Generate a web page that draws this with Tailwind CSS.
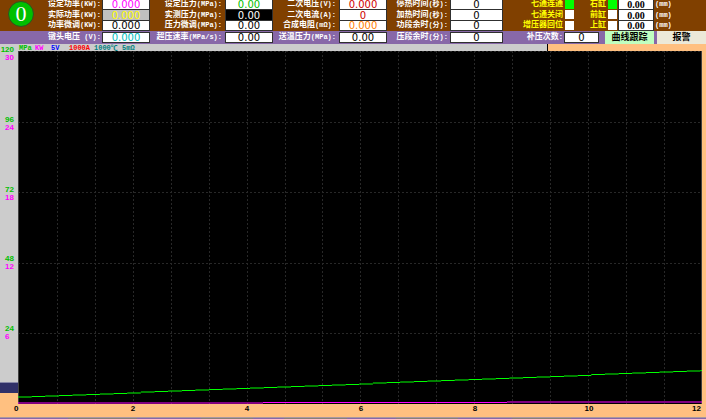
<!DOCTYPE html>
<html lang="zh-CN">
<head>
<meta charset="utf-8">
<title>曲线跟踪</title>
<script src="https://cdn.jsdelivr.net/npm/@tailwindcss/browser@4"></script>
</head>
<body class="min-h-screen flex flex-col overflow-hidden bg-[#ffc080] font-['Liberation_Serif','Noto_Sans_CJK_SC',serif] text-[8px] leading-[8px] font-bold whitespace-nowrap">

<header class="text-white">
  <!-- Set points and measured values -->
  <div class="relative bg-[#804000]">
    <output aria-label="状态" class="absolute left-2 top-px size-[26px] rounded-full border border-[#305020] bg-[#00c000] flex items-center justify-center text-[22px] font-normal">0</output>
    <div class="grid grid-rows-[10px_11px_10px] grid-cols-[102fr_48fr_75fr_48fr_66fr_48fr_63fr_53fr_62fr_9fr_33fr_11fr_36fr_52fr]">
      <label for="a1" class="min-w-0 pr-px pb-[2px] flex items-center justify-end">设定功率<span class="text-[7px] font-['Liberation_Mono','Noto_Sans_CJK_SC',monospace]">(KW):</span></label>
      <input id="a1" readonly value="0.000" class="min-w-0 w-full h-full bg-white border-b border-x border-[#303030] text-center font-['DejaVu_Sans',sans-serif] text-[10px] leading-[9px] font-normal text-[#ff00ff]">
      <label for="a2" class="min-w-0 pr-[3px] pb-[2px] flex items-center justify-end">设定压力<span class="text-[7px] font-['Liberation_Mono','Noto_Sans_CJK_SC',monospace]">(MPa):</span></label>
      <input id="a2" readonly value="0.00" class="min-w-0 w-full h-full bg-white border-b border-x border-[#303030] text-center font-['DejaVu_Sans',sans-serif] text-[10px] leading-[9px] font-normal text-[#00c000]">
      <label for="a3" class="min-w-0 pr-[3px] pb-[2px] flex items-center justify-end">二次电压<span class="text-[7px] font-['Liberation_Mono','Noto_Sans_CJK_SC',monospace]">(V):</span></label>
      <input id="a3" readonly value="0.000" class="min-w-0 w-full h-full bg-white border-b border-x border-[#303030] text-center font-['DejaVu_Sans',sans-serif] text-[10px] leading-[9px] font-normal text-[#d00000]">
      <label for="a4" class="min-w-0 pr-[2px] pb-[2px] flex items-center justify-end">停热时间<span class="text-[7px] font-['Liberation_Mono','Noto_Sans_CJK_SC',monospace]">(秒):</span></label>
      <input id="a4" readonly value="0" class="min-w-0 w-full h-full bg-white border-b border-x border-[#303030] text-center font-['DejaVu_Sans',sans-serif] text-[10px] leading-[9px] font-normal text-black">
      <label for="a5" class="min-w-0 pr-[2px] pb-[2px] flex items-center justify-end text-[#ffff00]">七通连通</label>
      <input id="a5" type="checkbox" checked class="appearance-none size-[9px] bg-white checked:bg-[#00ff00]">
      <label for="a6" class="min-w-0 pr-px pb-[2px] flex items-center justify-end text-[#ffff00]">右缸</label>
      <input id="a6" type="checkbox" checked class="appearance-none justify-self-center size-[9px] bg-white checked:bg-[#00ff00]">
      <input id="a7" aria-label="右缸 (mm)" readonly value="0.00" class="min-w-0 w-full h-full bg-white border-b border-x border-[#303030] text-center text-[10px] leading-[9px] font-bold text-black">
      <label for="a7" class="pl-px pb-[2px] flex items-center text-[7px] font-['Liberation_Mono',monospace]">(mm)</label>

      <label for="b1" class="min-w-0 pr-px pb-[2px] flex items-center justify-end">实际功率<span class="text-[7px] font-['Liberation_Mono','Noto_Sans_CJK_SC',monospace]">(KW):</span></label>
      <input id="b1" readonly value="0.000" class="min-w-0 w-full h-full bg-[#c0c0c0] border-b border-x border-[#303030] text-center font-['DejaVu_Sans',sans-serif] text-[10px] leading-[9px] font-normal text-[#ffff00]">
      <label for="b2" class="min-w-0 pr-[3px] pb-[2px] flex items-center justify-end">实测压力<span class="text-[7px] font-['Liberation_Mono','Noto_Sans_CJK_SC',monospace]">(MPa):</span></label>
      <input id="b2" readonly value="0.00" class="min-w-0 w-full h-full bg-black border-b border-x border-[#303030] text-center font-['DejaVu_Sans',sans-serif] text-[10px] leading-[9px] font-normal text-white">
      <label for="b3" class="min-w-0 pr-[3px] pb-[2px] flex items-center justify-end">二次电流<span class="text-[7px] font-['Liberation_Mono','Noto_Sans_CJK_SC',monospace]">(A):</span></label>
      <input id="b3" readonly value="0" class="min-w-0 w-full h-full bg-white border-b border-x border-[#303030] text-center font-['DejaVu_Sans',sans-serif] text-[10px] leading-[9px] font-normal text-[#d00000]">
      <label for="b4" class="min-w-0 pr-[2px] pb-[2px] flex items-center justify-end">加热时间<span class="text-[7px] font-['Liberation_Mono','Noto_Sans_CJK_SC',monospace]">(秒):</span></label>
      <input id="b4" readonly value="0" class="min-w-0 w-full h-full bg-white border-b border-x border-[#303030] text-center font-['DejaVu_Sans',sans-serif] text-[10px] leading-[9px] font-normal text-black">
      <label for="b5" class="min-w-0 pr-[2px] pb-[2px] flex items-center justify-end text-[#ffff00]">七通关闭</label>
      <input id="b5" type="checkbox" class="appearance-none size-[9px] bg-white checked:bg-[#00ff00]">
      <label for="b6" class="min-w-0 pr-px pb-[2px] flex items-center justify-end text-[#ffff00]">前缸</label>
      <input id="b6" type="checkbox" class="appearance-none justify-self-center size-[9px] bg-white checked:bg-[#00ff00]">
      <input id="b7" aria-label="前缸 (mm)" readonly value="0.00" class="min-w-0 w-full h-full bg-white border-b border-x border-[#303030] text-center text-[10px] leading-[9px] font-bold text-black">
      <label for="b7" class="pl-px pb-[2px] flex items-center text-[7px] font-['Liberation_Mono',monospace]">(mm)</label>

      <label for="c1" class="min-w-0 pr-px pb-[2px] flex items-center justify-end">功率微调<span class="text-[7px] font-['Liberation_Mono','Noto_Sans_CJK_SC',monospace]">(KW):</span></label>
      <input id="c1" readonly value="0.000" class="min-w-0 w-full h-full bg-white border-b border-x border-[#303030] text-center font-['DejaVu_Sans',sans-serif] text-[10px] leading-[9px] font-normal text-black">
      <label for="c2" class="min-w-0 pr-[3px] pb-[2px] flex items-center justify-end">压力微调<span class="text-[7px] font-['Liberation_Mono','Noto_Sans_CJK_SC',monospace]">(MPa):</span></label>
      <input id="c2" readonly value="0.00" class="min-w-0 w-full h-full bg-white border-b border-x border-[#303030] text-center font-['DejaVu_Sans',sans-serif] text-[10px] leading-[9px] font-normal text-black">
      <label for="c3" class="min-w-0 pr-[3px] pb-[2px] flex items-center justify-end">合成电阻<span class="text-[7px] font-['Liberation_Mono','Noto_Sans_CJK_SC',monospace]">(mΩ):</span></label>
      <input id="c3" readonly value="0.000" class="min-w-0 w-full h-full bg-white border-b border-x border-[#303030] text-center font-['DejaVu_Sans',sans-serif] text-[10px] leading-[9px] font-normal text-[#ff8000]">
      <label for="c4" class="min-w-0 pr-[2px] pb-[2px] flex items-center justify-end">功段余时<span class="text-[7px] font-['Liberation_Mono','Noto_Sans_CJK_SC',monospace]">(分):</span></label>
      <input id="c4" readonly value="0" class="min-w-0 w-full h-full bg-white border-b border-x border-[#303030] text-center font-['DejaVu_Sans',sans-serif] text-[10px] leading-[9px] font-normal text-black">
      <label for="c5" class="min-w-0 pr-[2px] pb-[2px] flex items-center justify-end text-[#ffff00]">增压器回位</label>
      <input id="c5" type="checkbox" class="appearance-none size-[9px] bg-white checked:bg-[#00ff00]">
      <label for="c6" class="min-w-0 pr-px pb-[2px] flex items-center justify-end text-[#ffff00]">上缸</label>
      <input id="c6" type="checkbox" class="appearance-none justify-self-center size-[9px] bg-white checked:bg-[#00ff00]">
      <input id="c7" aria-label="上缸 (mm)" readonly value="0.00" class="min-w-0 w-full h-full bg-white border-b border-x border-[#303030] text-center text-[10px] leading-[9px] font-bold text-black">
      <label for="c7" class="pl-px pb-[2px] flex items-center text-[7px] font-['Liberation_Mono',monospace]">(mm)</label>
    </div>
  </div>

  <!-- Voltage row and actions -->
  <div class="bg-[#8868a8] grid grid-rows-[13px] grid-cols-[102fr_48fr_75fr_48fr_66fr_48fr_63fr_53fr_61fr_35fr_6fr_49fr_3fr_49fr]">
    <label for="d1" class="min-w-0 pr-px pb-px flex items-center justify-end">镦头电压<span class="text-[7px] font-['Liberation_Mono','Noto_Sans_CJK_SC',monospace]">&nbsp;(V):</span></label>
    <input id="d1" readonly value="0.000" class="min-w-0 w-full h-[11px] self-center bg-white border border-[#303030] text-center font-['DejaVu_Sans',sans-serif] text-[10px] leading-[9px] font-normal text-[#00c0c0]">
    <label for="d2" class="min-w-0 pr-[3px] pb-px flex items-center justify-end">超压速率<span class="text-[7px] font-['Liberation_Mono','Noto_Sans_CJK_SC',monospace]">(MPa/s):</span></label>
    <input id="d2" readonly value="0.00" class="min-w-0 w-full h-[11px] self-center bg-white border border-[#303030] text-center font-['DejaVu_Sans',sans-serif] text-[10px] leading-[9px] font-normal text-black">
    <label for="d3" class="min-w-0 pr-[3px] pb-px flex items-center justify-end">送温压力<span class="text-[7px] font-['Liberation_Mono','Noto_Sans_CJK_SC',monospace]">(MPa):</span></label>
    <input id="d3" readonly value="0.00" class="min-w-0 w-full h-[11px] self-center bg-white border border-[#303030] text-center font-['DejaVu_Sans',sans-serif] text-[10px] leading-[9px] font-normal text-black">
    <label for="d4" class="min-w-0 pr-[2px] pb-px flex items-center justify-end">压段余时<span class="text-[7px] font-['Liberation_Mono','Noto_Sans_CJK_SC',monospace]">(分):</span></label>
    <input id="d4" readonly value="0" class="min-w-0 w-full h-[11px] self-center bg-white border border-[#303030] text-center font-['DejaVu_Sans',sans-serif] text-[10px] leading-[9px] font-normal text-black">
    <label for="d5" class="min-w-0 pr-px pb-px flex items-center justify-end">补压次数<span class="text-[7px] font-['Liberation_Mono',monospace]">:</span></label>
    <input id="d5" readonly value="0" class="min-w-0 w-full h-[11px] self-center bg-white border border-[#303030] text-center font-['DejaVu_Sans',sans-serif] text-[10px] leading-[9px] font-normal text-black">
    <button class="col-start-12 min-w-0 bg-[#c0ffc0] text-black text-[9px] leading-[11px] flex items-center justify-center">曲线跟踪</button>
    <button class="col-start-14 min-w-0 bg-[#ece9d8] text-black text-[9px] leading-[11px] flex items-center justify-center">报警</button>
  </div>
</header>

<main class="flex-1 grid grid-cols-[18px_1fr] font-['Liberation_Sans','Noto_Sans_CJK_SC',sans-serif]">
  <!-- Vertical scales: pressure (green) and power (magenta) -->
  <div class="flex flex-col">
    <div class="flex-1 bg-[#cccccc] pt-[2px] pb-[41px] pr-1 flex flex-col justify-between text-right text-[#00c000]">
      <div>120<div class="w-[9px] ml-auto text-left text-[#ff00ff]">30</div></div>
      <div>96<div class="w-[9px] ml-auto text-left text-[#ff00ff]">24</div></div>
      <div>72<div class="w-[9px] ml-auto text-left text-[#ff00ff]">18</div></div>
      <div>48<div class="w-[9px] ml-auto text-left text-[#ff00ff]">12</div></div>
      <div>24<div class="w-[9px] ml-auto text-left text-[#ff00ff]">6</div></div>
    </div>
    <div class="h-[11px] bg-[#303068] border-t border-[#8888a8]"></div>
    <div class="h-[11px]"></div>
  </div>

  <div class="flex flex-col">
    <div class="h-[7px] grid grid-cols-[530fr_158fr] text-[7px] font-['Liberation_Mono','Noto_Sans_CJK_SC',monospace]">
      <div class="bg-[#cccccc] border-r border-black flex items-center pl-px">
        <span class="w-4 text-[#00c000]">MPa</span>
        <span class="w-4 text-[#ff00ff]">KW</span>
        <span class="w-[18px] text-[#0000ff]">5V</span>
        <span class="w-[25px] text-[#ff0000]">1000A</span>
        <span class="w-7 text-[#008080]">1000℃</span>
        <span class="text-[#008080]">5mΩ</span>
      </div>
    </div>
    <div class="flex-1 flex flex-col pr-1">
      <svg class="block w-full flex-1 min-h-0 bg-black" viewBox="0 0 684 353" preserveAspectRatio="none" role="img" aria-label="压力与功率曲线">
        <g stroke="#282828" stroke-dasharray="2 2" fill="none">
          <path d="M39.5 0V353M77.5 0V353M115.5 0V353M153.5 0V353M191.5 0V353M229.5 0V353M267.5 0V353M304.5 0V353M342.5 0V353M380.5 0V353M418.5 0V353M456.5 0V353M494.5 0V353M532.5 0V353M570.5 0V353M608.5 0V353M646.5 0V353"/>
          <path d="M0 .5H684M0 71.5H684M0 141.5H684M0 212.5H684M0 282.5H684"/>
        </g>
        <path d="M.5 0V353M683.5 0V353" stroke="#404040"/>
        <path id="pressure" fill="none" stroke="#00ff00"/>
        <path d="M0 352H245M245 351.5H489M489 351H684" stroke="#ff00ff"/>
      </svg>
    </div>
  </div>
</main>

<!-- Horizontal scale -->
<div class="h-[13px] pl-[14px] pr-[5px] pt-px flex font-['Liberation_Sans',sans-serif] text-black">
  <span class="flex-[62]">0</span>
  <span class="flex-[114] text-center">2</span>
  <span class="flex-[114] text-center">4</span>
  <span class="flex-[114] text-center">6</span>
  <span class="flex-[114] text-center">8</span>
  <span class="flex-[114] text-center">10</span>
  <span class="flex-[55] text-right">12</span>
</div>
<footer class="h-[2px] grid grid-cols-[68fr_69fr_64fr_52fr_31fr_63fr_49fr_62fr_54fr_59fr_37fr_98fr] bg-[#8868a8] border-t border-[#a898a0]">
  <i class="col-start-2 bg-[#888078]"></i>
  <i class="col-start-4 bg-[#888078]"></i>
  <i class="col-start-6 bg-[#888078]"></i>
  <i class="col-start-8 bg-[#888078]"></i>
  <i class="col-start-10 bg-[#888078]"></i>
</footer>

<script>
  // Pressure curve: sampled trace rising in half-unit steps
  const step = 13.65;
  let d = "";
  for (let k = 0; k * step < 684; k++) {
    const y = Math.round((346 - k * 0.53) * 2) / 2;
    d += `M${k * step} ${y}H${Math.min(684, (k + 1) * step)}`;
  }
  document.getElementById("pressure").setAttribute("d", d);
</script>
</body>
</html>
